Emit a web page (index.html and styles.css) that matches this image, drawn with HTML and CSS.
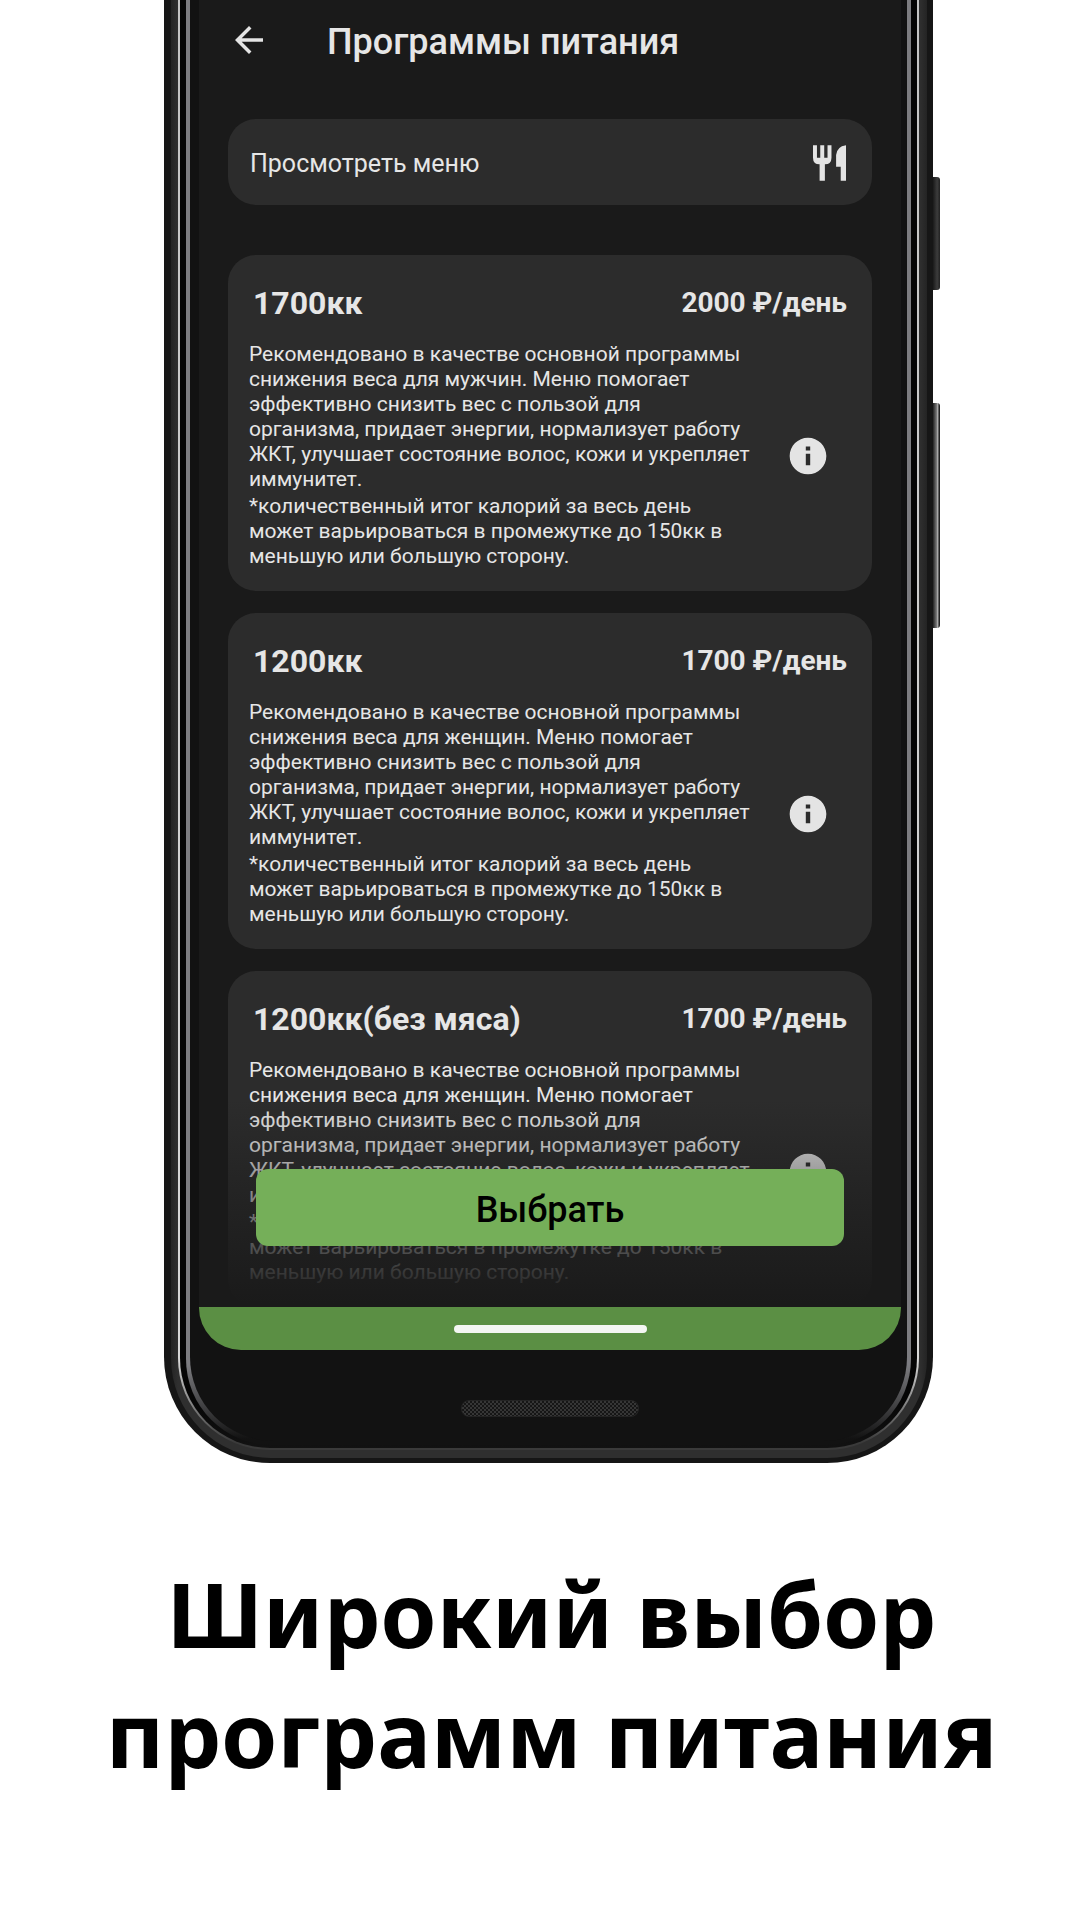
FILE: index.html
```html
<!DOCTYPE html>
<html lang="ru">
<head>
<meta charset="utf-8">
<meta name="viewport" content="width=device-width, initial-scale=1">
<title>Программы питания</title>
<link rel="stylesheet" href="styles.css">
</head>
<body>
<svg class="sprite" aria-hidden="true">
  <symbol id="icon-info" viewBox="0 0 24 24"><path d="M12 2C6.480 2 2 6.480 2 12s4.480 10 10 10 10-4.480 10-10S17.520 2 12 2zm1.200 15h-2.400v-6.200h2.400V17zm0-8h-2.400V6.800h2.400V9z"/></symbol>
</svg>
<main class="promo">
  <div class="phone">
    <span class="side-key side-key-power"></span>
    <span class="side-key side-key-volume"></span>
    <div class="phone-body"><div class="phone-rim"><div class="phone-gap"><div class="phone-edge"><div class="glass">
      <div class="screen">
        <header class="app-bar">
          <button class="icon-button" type="button" aria-label="Назад">
            <svg class="icon-back" viewBox="0 0 24 24"><path d="M20 11H7.830l5.590-5.590L12 4l-8 8 8 8 1.410-1.410L7.830 13H20v-2z"/></svg>
          </button>
          <h2 class="app-title">Программы питания</h2>
        </header>
        <button class="menu-link" type="button">
          <span>Просмотреть меню</span>
          <svg class="icon-menu" viewBox="0 0 100 108"><path d="M0 0h12v38h10V0h12v38h10V0h12v38q0 20-20 20v50H20V58Q0 58 0 38zM100 0v108H84V65H70V30Q72 4 100 0z"/></svg>
        </button>
        <section class="programs">
          <article class="card">
            <div class="card-head"><h3 class="card-title">1700кк</h3><span class="card-price">2000 ₽/день</span></div>
            <div class="card-body">
              <div class="card-text">
                <p>Рекомендовано в качестве основной программы снижения веса для мужчин. Меню помогает эффективно снизить вес с пользой для организма, придает энергии, нормализует работу ЖКТ, улучшает состояние волос, кожи и укрепляет иммунитет.</p>
                <p>*количественный итог калорий за весь день может варьироваться в промежутке до 150кк в меньшую или большую сторону.</p>
              </div>
              <button class="icon-button" type="button" aria-label="Подробнее"><svg class="icon-info"><use href="#icon-info"/></svg></button>
            </div>
          </article>
          <article class="card">
            <div class="card-head"><h3 class="card-title">1200кк</h3><span class="card-price">1700 ₽/день</span></div>
            <div class="card-body">
              <div class="card-text">
                <p>Рекомендовано в качестве основной программы снижения веса для женщин. Меню помогает эффективно снизить вес с пользой для организма, придает энергии, нормализует работу ЖКТ, улучшает состояние волос, кожи и укрепляет иммунитет.</p>
                <p>*количественный итог калорий за весь день может варьироваться в промежутке до 150кк в меньшую или большую сторону.</p>
              </div>
              <button class="icon-button" type="button" aria-label="Подробнее"><svg class="icon-info"><use href="#icon-info"/></svg></button>
            </div>
          </article>
          <article class="card">
            <div class="card-head"><h3 class="card-title">1200кк(без мяса)</h3><span class="card-price">1700 ₽/день</span></div>
            <div class="card-body">
              <div class="card-text">
                <p>Рекомендовано в качестве основной программы снижения веса для женщин. Меню помогает эффективно снизить вес с пользой для организма, придает энергии, нормализует работу ЖКТ, улучшает состояние волос, кожи и укрепляет иммунитет.</p>
                <p>*количественный итог калорий за весь день может варьироваться в промежутке до 150кк в меньшую или большую сторону.</p>
              </div>
              <button class="icon-button" type="button" aria-label="Подробнее"><svg class="icon-info"><use href="#icon-info"/></svg></button>
            </div>
          </article>
        </section>
        <div class="action-bar"><button class="select-button" type="button">Выбрать</button></div>
      </div>
      <div class="nav-bar"><span class="nav-handle"></span></div>
      <div class="chin"><span class="speaker"></span></div>
    </div></div></div></div></div>
  </div>
  <h1 class="headline">Широкий выбор программ питания</h1>
</main>
</body>
</html>
```
FILE: styles.css
```css
* { box-sizing: border-box; }

body {
  margin: 0;
  background: #fff;
  font-family: Roboto, sans-serif;
  color: #e6e6e6;
}

h1, h2, h3, p { margin: 0; }

button {
  margin: 0;
  padding: 0;
  border: 0;
  background: none;
  color: inherit;
  font: inherit;
  cursor: pointer;
}

svg { display: block; fill: #e4e4e4; }
.sprite { position: absolute; width: 0; height: 0; }

.promo {
  display: flex;
  flex-direction: column;
  align-items: center;
  padding-left: 17px;
}

/* Phone frame: nested shells, from the outer case to the glass */
.phone {
  position: relative;
  width: 100%;
  max-width: 769px;
  padding: 0 6px 5px 7px;
  background: #161616;
  border-radius: 0 0 106px 106px;
}
.phone-body {
  padding: 0 8px 8px 7px;
  background: linear-gradient(to right, #242424, #2f2f2f 7px, #2f2f2f calc(100% - 7px), #242424);
  border-radius: 0 0 100px 100px;
}
.phone-rim {
  padding: 0 2px 2px;
  background: linear-gradient(#c4c4c4, #d8d8d8 calc(100% - 90px), #3a3a3a calc(100% - 8px));
  border-radius: 0 0 92px 92px;
}
.phone-gap {
  padding: 0 6px 3px;
  background: linear-gradient(#050505 calc(100% - 50px), #121212);
  border-radius: 0 0 90px 90px;
}
.phone-edge {
  padding: 0 4px 4px;
  background: linear-gradient(#7c7c80 calc(100% - 80px), #121212 calc(100% - 6px));
  border-radius: 0 0 86px 86px;
}
.glass {
  padding: 0 6px 0 9px;
  background: #121212;
  border-radius: 0 0 84px 84px;
}
.side-key {
  position: absolute;
  left: 100%;
  width: 7px;
  border-radius: 0 3px 3px 0;
}
.side-key-power {
  top: 177px;
  height: 113px;
  background: linear-gradient(to right, #1a1a1a, #3c3c3c 60%, #222);
}
.side-key-volume {
  top: 403px;
  height: 225px;
  background: linear-gradient(to right, #222, #777 50%, #aaa 65%, #222 90%);
}

/* App screen */
.screen {
  position: relative;
  padding: 0 29px;
  background: #1a1a1a;
}
.app-bar {
  display: flex;
  align-items: flex-start;
  gap: 57px;
  padding: 19px 0 54px;
}
.icon-back { width: 42px; height: 42px; }
.app-title {
  font-size: 36px;
  font-weight: 500;
  line-height: 46px;
}
.menu-link {
  display: flex;
  align-items: center;
  justify-content: space-between;
  width: 100%;
  height: 86px;
  padding: 2px 26px 0 22px;
  background: #2c2c2c;
  border-radius: 28px;
  font-size: 25px;
}
.icon-menu { width: 33px; height: 36px; }
.programs {
  display: grid;
  gap: 22px;
  padding-top: 50px;
}
.card {
  padding: 28px 22px 22px 21px;
  background: #2c2c2c;
  border-radius: 28px;
}
.card-head {
  display: flex;
  align-items: center;
  justify-content: space-between;
  padding: 0 3px 0 4px;
  line-height: 40px;
}
.card-title { font-size: 32px; font-weight: 700; }
.card-price { font-size: 28px; font-weight: 700; }
.card-body {
  display: flex;
  align-items: center;
  gap: 33px;
  padding: 19px 20px 0 0;
}
.card-text {
  display: grid;
  flex: 1;
  gap: 2px;
  font-size: 21px;
  line-height: 25px;
}
.icon-info { width: 44px; height: 44px; }

.action-bar {
  position: absolute;
  left: 0;
  right: 0;
  bottom: 0;
  padding: 69px 57px 61px;
  background: linear-gradient(rgba(26, 26, 26, 0), #1a1a1a 98%);
}
.select-button {
  display: block;
  width: 100%;
  height: 77px;
  padding-top: 4px;
  background: #75af59;
  border-radius: 12px;
  color: #000;
  font-size: 36px;
  font-weight: 500;
}
.nav-bar {
  display: flex;
  justify-content: center;
  padding: 18px 0 17px;
  background: #5b8f44;
  border-radius: 0 0 42px 42px;
}
.nav-handle {
  width: 193px;
  height: 8px;
  background: #f4f6f3;
  border-radius: 4px;
}
.chin {
  display: flex;
  justify-content: center;
  padding: 50px 0 24px;
}
.speaker {
  width: 178px;
  height: 17px;
  border: 1px solid #242424;
  border-radius: 8px;
  background: repeating-conic-gradient(#363636 0 25%, #161616 0 50%) 0 0 / 4px 4px;
}

.headline {
  max-width: 960px;
  padding: 90px 0 80px 6px;
  color: #000;
  font-family: "Noto Sans", "Open Sans", sans-serif;
  font-size: 90px;
  font-weight: 700;
  line-height: 120px;
  text-align: center;
}
```
